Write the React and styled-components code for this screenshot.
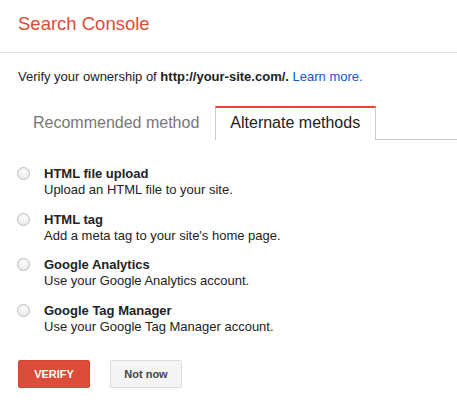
import React, { useState } from "react";
import styled, { createGlobalStyle } from "styled-components";

const GlobalStyle = createGlobalStyle`
  html, body {
    margin: 0;
    padding: 0;
    background: #fff;
  }
  body {
    font-family: "Liberation Sans", Arial, sans-serif;
    color: #222;
  }
`;

const Page = styled.div`
  width: 457px;
  min-height: 409px;
  background: #fff;
`;

const Header = styled.header`
  height: 53px;
  padding: 0 18px;
  display: flex;
  align-items: center;
  border-bottom: 1px solid #e5e5e5;
  box-sizing: border-box;
`;

const Title = styled.h1`
  margin: 0;
  font-size: 18.5px;
  font-weight: normal;
  color: #dd4b39;
  padding-bottom: 4px;
`;

const Body = styled.div`
  padding: 0 0 0 18px;
`;

const Intro = styled.p`
  margin: 16px 0 0;
  font-size: 13px;
  line-height: 16px;
  color: #222;

  b {
    font-weight: bold;
  }

  a {
    color: #1155cc;
    text-decoration: none;
  }
`;

const TabList = styled.div`
  display: flex;
  margin-top: 21px;
  border-bottom: 1px solid #ccc;
  height: 33px;
`;

const Tab = styled.button`
  font-family: inherit;
  font-size: 16px;
  height: 34px;
  padding: 0 15px 2px 14px;
  background: #fff;
  cursor: pointer;
  box-sizing: border-box;
  color: ${(p) => (p.$active ? "#222" : "#777")};
  border: 1px solid ${(p) => (p.$active ? "#ccc" : "transparent")};
  border-top: 2px solid ${(p) => (p.$active ? "#dd4b39" : "transparent")};
  border-bottom: none;
  margin-bottom: -1px;
`;

const MethodList = styled.div`
  display: flex;
  flex-direction: column;
  gap: 13.5px;
  margin-top: 26px;
`;

const Method = styled.label`
  display: flex;
  align-items: flex-start;
  gap: 14px;
  cursor: pointer;
`;

const Radio = styled.span`
  flex: none;
  width: 13px;
  height: 13px;
  margin: 1px 0 0 -1px;
  border-radius: 50%;
  box-sizing: border-box;
  border: 1px solid ${(p) => (p.$checked ? "#888" : "#bdbdbd")};
  background: radial-gradient(circle at 50% 35%, #fdfdfd 0%, #ececec 70%, #e2e2e2 100%);
  display: flex;
  align-items: center;
  justify-content: center;

  &::after {
    content: "";
    width: 5px;
    height: 5px;
    border-radius: 50%;
    background: ${(p) => (p.$checked ? "#333" : "transparent")};
  }
`;

const MethodText = styled.div`
  display: flex;
  flex-direction: column;
  font-size: 13px;
  line-height: 16px;
`;

const MethodName = styled.span`
  font-weight: bold;
  color: #222;
`;

const MethodDesc = styled.span`
  color: #222;
`;

const Actions = styled.div`
  display: flex;
  gap: 20px;
  margin-top: 25px;
`;

const Button = styled.button`
  font-family: inherit;
  font-size: 11px;
  font-weight: bold;
  min-width: 72px;
  height: 28px;
  padding: 0 8px;
  border-radius: 2px;
  cursor: pointer;
  box-sizing: border-box;
  color: ${(p) => (p.$primary ? "#fff" : "#444")};
  background: ${(p) => (p.$primary ? "#dd4b39" : "#f5f5f5")};
  border: 1px solid ${(p) => (p.$primary ? "#d14836" : "#dcdcdc")};
  text-transform: ${(p) => (p.$primary ? "uppercase" : "none")};
`;

const methods = [
  { name: "HTML file upload", desc: "Upload an HTML file to your site." },
  { name: "HTML tag", desc: "Add a meta tag to your site's home page." },
  { name: "Google Analytics", desc: "Use your Google Analytics account." },
  { name: "Google Tag Manager", desc: "Use your Google Tag Manager account." },
];

export default function App() {
  const [tab, setTab] = useState(1);
  const [picked, setPicked] = useState(null);

  return (
    <Page>
      <GlobalStyle />
      <Header>
        <Title>Search Console</Title>
      </Header>
      <Body>
        <Intro>
          Verify your ownership of <b>http://your-site.com/.</b>{" "}
          <a href="#">Learn more.</a>
        </Intro>
        <TabList>
          <Tab $active={tab === 0} onClick={() => setTab(0)}>
            Recommended method
          </Tab>
          <Tab $active={tab === 1} onClick={() => setTab(1)}>
            Alternate methods
          </Tab>
        </TabList>
        <MethodList>
          {methods.map((m, i) => (
            <Method key={m.name} onClick={() => setPicked(i)}>
              <Radio $checked={picked === i} />
              <MethodText>
                <MethodName>{m.name}</MethodName>
                <MethodDesc>{m.desc}</MethodDesc>
              </MethodText>
            </Method>
          ))}
        </MethodList>
        <Actions>
          <Button $primary>Verify</Button>
          <Button>Not now</Button>
        </Actions>
      </Body>
    </Page>
  );
}
